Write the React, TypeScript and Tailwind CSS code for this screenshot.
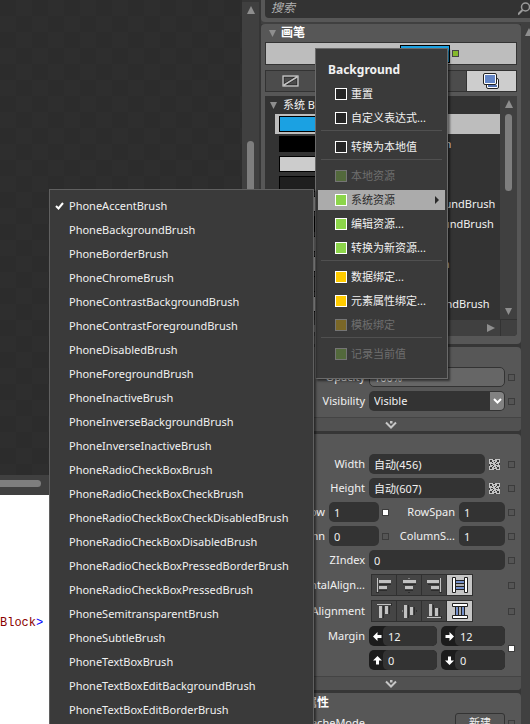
import type { ReactNode } from 'react';

const resources = [
  'PhoneAccentBrush',
  'PhoneBackgroundBrush',
  'PhoneBorderBrush',
  'PhoneChromeBrush',
  'PhoneContrastBackgroundBrush',
  'PhoneContrastForegroundBrush',
  'PhoneDisabledBrush',
  'PhoneForegroundBrush',
  'PhoneInactiveBrush',
  'PhoneInverseBackgroundBrush',
  'PhoneInverseInactiveBrush',
  'PhoneRadioCheckBoxBrush',
  'PhoneRadioCheckBoxCheckBrush',
  'PhoneRadioCheckBoxCheckDisabledBrush',
  'PhoneRadioCheckBoxDisabledBrush',
  'PhoneRadioCheckBoxPressedBorderBrush',
  'PhoneRadioCheckBoxPressedBrush',
  'PhoneSemitransparentBrush',
  'PhoneSubtleBrush',
  'PhoneTextBoxBrush',
  'PhoneTextBoxEditBackgroundBrush',
  'PhoneTextBoxEditBorderBrush',
];

const swatches = [
  'bg-[#1ba1e2]',
  'bg-black',
  'bg-[#cccccc]',
  'bg-[#1f1f1f]',
  'bg-[#cccccc]',
  'bg-black',
  'bg-[#8a8a8a]',
  'bg-[#cccccc]',
  'bg-[#333333]',
  'bg-[#cccccc]',
];

type Entry = { label: string; color: string; disabled?: boolean; active?: boolean };

const menuGroups: Entry[][] = [
  [
    { label: '重置', color: 'border-white bg-[#262626]' },
    { label: '自定义表达式...', color: 'border-white bg-[#262626]' },
  ],
  [{ label: '转换为本地值', color: 'border-white bg-[#262626]' }],
  [
    { label: '本地资源', color: 'border-[#757575] bg-[#53693c]', disabled: true },
    { label: '系统资源', color: 'border-white bg-[#8cd54a]', active: true },
    { label: '编辑资源...', color: 'border-white bg-[#8cd54a]' },
    { label: '转换为新资源...', color: 'border-white bg-[#8cd54a]' },
  ],
  [
    { label: '数据绑定...', color: 'border-white bg-[#ffcc00]' },
    { label: '元素属性绑定...', color: 'border-white bg-[#ffcc00]' },
    { label: '模板绑定', color: 'border-[#757575] bg-[#7a6727]', disabled: true },
  ],
  [{ label: '记录当前值', color: 'border-[#757575] bg-[#53693c]', disabled: true }],
];

function Triangle({ dir, className = '' }: { dir: 'up' | 'down' | 'right'; className?: string }) {
  const d = { up: 'M4 0L8 8H0Z', down: 'M0 1H7L3.5 8Z', right: 'M0 0L8 4L0 8Z' }[dir];
  return (
    <svg viewBox="0 0 8 8" className={`size-2 shrink-0 fill-[#8e8e8e] ${className}`}>
      <path d={d} />
    </svg>
  );
}

function Marker({ set = false, name }: { set?: boolean; name: string }) {
  return (
    <button
      aria-label={`${name} options`}
      className={`size-[7px] shrink-0 border border-[#3c3c3c] ${set ? 'bg-white' : 'bg-[#555555]'}`}
    />
  );
}

function Panel({ children, className = '' }: { children: ReactNode; className?: string }) {
  return <section className={`overflow-hidden rounded-[4px] bg-[#575757] ${className}`}>{children}</section>;
}

function Expander({ name }: { name: string }) {
  return (
    <button aria-label={name} className="flex h-3.5 w-full items-center justify-center border-t border-[#444444] bg-[#515151]">
      <svg viewBox="0 0 12 9" className="h-[9px] w-3">
        <path d="M1 2.5L6 7.5L11 2.5" fill="none" stroke="#c6c6c6" strokeWidth="2" />
        <rect x="5" y="1" width="2.5" height="2.5" fill="#c6c6c6" />
      </svg>
    </button>
  );
}

const field = 'h-5 min-w-0 rounded-[5px] bg-[#333333] px-[5px] text-[#f1f1f1] outline-none';

function Row({ id, label, set, children }: { id: string; label: string; set?: boolean; children: ReactNode }) {
  return (
    <div className="flex items-center pr-1.5 pl-1">
      <label htmlFor={id} className="w-[100px] shrink-0 text-right whitespace-nowrap">{label}</label>
      <div className="ml-1 flex min-w-0 flex-1 items-center">{children}</div>
      <div className="ml-[3px] flex"><Marker name={label} set={set} /></div>
    </div>
  );
}

function SplitRow({ label, value, set, label2, value2 }: { label: string; value: string; set?: boolean; label2: string; value2: string }) {
  return (
    <div className="flex items-center pr-1.5 pl-1">
      <label htmlFor={label} className="w-[60px] shrink-0 text-right">{label}</label>
      <input id={label} defaultValue={value} className={`${field} ml-1 w-[50px]`} />
      <div className="ml-[3px] flex"><Marker name={label} set={set} /></div>
      <label htmlFor={label2} className="min-w-0 flex-1 text-right whitespace-nowrap">{label2}</label>
      <input id={label2} defaultValue={value2} className={`${field} ml-1 w-[46px]`} />
      <div className="ml-[3px] flex"><Marker name={label2} /></div>
    </div>
  );
}

function AutoIcon() {
  return (
    <svg viewBox="0 0 11 11" className="size-[11px]" shapeRendering="crispEdges">
      <rect width="11" height="11" fill="#c4c4c4" />
      <g fill="#3a3a3a">
        <path d="M4 0H6V1H4ZM5 2H6V3H5ZM0 5H1V7H0ZM2 5H4V6H2ZM7 5H9V6H7ZM10 4H11V6H10ZM5 8H6V9H5ZM5 10H7V11H5Z" />
        <path d="M2 2H3V3H2ZM3 3H4V4H3ZM8 2H9V3H8ZM7 3H8V4H7ZM6 4H7V5H6ZM4 6H5V7H4ZM3 7H4V8H3ZM2 8H3V9H2ZM7 7H8V8H7ZM8 8H9V9H8Z" />
        <path d="M1 1H3V2H1ZM1 2H2V3H1ZM8 1H10V2H8ZM9 2H10V3H9ZM1 8H2V10H1ZM2 9H3V10H2ZM9 8H10V10H9ZM8 9H9V10H8Z" />
      </g>
    </svg>
  );
}

const alignShapes = [
  <g key="s">
    <path d="M1.500 1V15" stroke="#c2c2c2" />
    <path d="M3 3H15V6H3ZM3 9H11V12H3Z" fill="#c2c2c2" />
    <path d="M3 7.500H15M3 13.500H11M0 15.500H3" stroke="#2c2c2c" />
  </g>,
  <g key="c">
    <path d="M8 1V2M8 7V8M8 13V14" stroke="#c2c2c2" />
    <path d="M2 3H15V6H2ZM4 9H12V12H4Z" fill="#c2c2c2" />
    <path d="M2 7.500H15M4 13.500H12M7 15.500H9" stroke="#2c2c2c" />
  </g>,
  <g key="e">
    <path d="M14.500 1V15" stroke="#c2c2c2" />
    <path d="M1 3H13V6H1ZM5 9H13V12H5Z" fill="#c2c2c2" />
    <path d="M2 7.500H13M5 13.500H13M13 15.500H16" stroke="#2c2c2c" />
  </g>,
  <g key="f" stroke="#222">
    <path d="M3 3.500H13V6.500H3ZM3 9.500H13V12.500H3Z" fill="#8fa9e0" />
    <path d="M4 5H12M4 11H12" stroke="#5b78b8" />
    <path d="M3 8H13" stroke="#999" />
    <path d="M.5.5H3.500V15.500H.5ZM12.500.5H15.500V15.500H12.500Z" fill="#fff" />
  </g>,
];

function AlignGroup({ id, vertical = false }: { id: string; vertical?: boolean }) {
  return (
    <div id={id} role="group" className="ml-0.5 flex h-[22px] divide-x divide-[#303030] border border-[#303030] bg-[#454545]">
      {alignShapes.map((shape, i) => (
        <button
          key={i}
          aria-label={`${id} ${i}`}
          className={`flex w-[25px] items-center justify-center ${i === 3 ? 'bg-[#c6c6c6]' : ''}`}
        >
          <svg viewBox="0 0 16 16" className="size-4">
            <g transform={vertical ? 'matrix(0 1 1 0 0 0)' : undefined}>{shape}</g>
          </svg>
        </button>
      ))}
    </div>
  );
}

function MarginField({ id, value, turn, className }: { id: string; value: string; turn: string; className: string }) {
  return (
    <div className={`flex h-5 items-center rounded-[5px] bg-[#1c1c1c] ${className}`}>
      <span className="flex w-3.5 shrink-0 justify-center pl-0.5">
        <svg viewBox="0 0 9 9" className={`size-[9px] fill-white ${turn}`}>
          <path d="M0 4.500L4.500 0V3H8.500V6H4.500V9Z" />
        </svg>
      </span>
      <input id={id} aria-label={id} defaultValue={value} className={`${field} w-full`} />
    </div>
  );
}

function BrushPanel() {
  return (
    <Panel className="px-1 pb-2">
      <h2 className="flex h-[18px] items-center gap-1 pl-1 text-xs font-bold text-white">
        <Triangle dir="down" />
        画笔
      </h2>
      <div className="flex h-[23px] items-center justify-end border border-[#333333] bg-[#bdbdbd] pr-[57px]">
        <span className="h-[18px] w-[50px] border border-black bg-[#1ba1e2]" />
        <button aria-label="Background options" className="ml-0.5 size-[7px] border border-[#444444] bg-[#84b92b]" />
      </div>
      <div role="tablist" className="mt-[5px] flex h-[22px] divide-x divide-[#333333] border border-[#333333] bg-[#4c4c4c]">
        <button role="tab" aria-label="No brush" className="flex flex-1 items-center justify-center">
          <svg viewBox="0 0 17 12" className="h-3 w-[17px]" fill="none">
            <path d="M1 1H16V11H1ZM2 10L15 2" stroke="#252525" strokeWidth="3" />
            <path d="M1 1H16V11H1ZM2 10L15 2" stroke="#c2c2c2" strokeWidth="1.500" />
          </svg>
        </button>
        <button role="tab" aria-label="Solid color brush" className="flex-1" />
        <button role="tab" aria-label="Gradient brush" className="flex-1" />
        <button role="tab" aria-label="Tile brush" className="flex flex-1 items-center justify-center">
          <span className="h-2.5 w-3.5 border border-[#8a8a8a]" />
        </button>
        <button role="tab" aria-label="Brush resources" className="flex flex-1 items-center justify-center bg-[#cdcdcd]">
          <svg viewBox="0 0 16 16" className="size-4" stroke="#222">
            <rect x="3.500" y="5.500" width="12" height="10" rx="1.500" fill="#fff" />
            <path d="M5 13H14" stroke="#5472b0" strokeWidth="2" />
            <rect x=".5" y=".5" width="13" height="11" rx="1.500" fill="#fff" />
            <rect x="2" y="2" width="10" height="8" fill="#6385c6" stroke="none" />
          </svg>
        </button>
      </div>
      <div className="mt-1 rounded-b-[4px] bg-[#333333]">
        <div className="flex">
          <div className="h-[223px] min-w-0 flex-1 overflow-hidden">
            <h3 className="flex h-[18px] items-center gap-[5px] pl-[5px] text-[#f1f1f1]">
              <Triangle dir="down" />
              系统 Brush 资源
            </h3>
            <ul className="ml-2.5">
              {swatches.map((color, i) => (
                <li key={resources[i]} className={`flex h-5 items-center gap-1.5 pl-1 ${i === 0 ? 'bg-[#bdbdbd]' : 'text-[#f1f1f1]'}`}>
                  <span className={`h-4 w-10 shrink-0 border border-black ${color}`} />
                  {i > 0 && resources[i]}
                </li>
              ))}
            </ul>
          </div>
          <div className="flex w-[17px] flex-col items-center bg-[#404040] py-1">
            <Triangle dir="up" />
            <span className="mt-1.5 h-[77px] w-[7px] rounded-full bg-[#7e7e7e]" />
            <Triangle dir="down" className="mt-auto" />
          </div>
        </div>
        <div className="flex h-[17px] items-center rounded-b-[4px] border-t border-[#333333] bg-[#404040]">
          <span className="ml-5 h-[7px] w-[163px] rounded-full bg-[#7e7e7e]" />
          <Triangle dir="right" className="mr-[5px] ml-auto" />
          <span className="h-full w-[17px] border-l border-[#333333]" />
        </div>
      </div>
    </Panel>
  );
}

function AppearancePanel() {
  return (
    <Panel>
      <h2 className="h-5 pl-5 text-xs leading-5 font-bold text-white">外观</h2>
      <div className="flex flex-col gap-1 pb-1.5">
        <Row id="opacity" label="Opacity">
          <input id="opacity" defaultValue="100%" className="h-5 w-full min-w-0 rounded-[5px] border border-[#333333] bg-[#666666] px-1 text-[#dddddd]" />
        </Row>
        <Row id="visibility" label="Visibility">
          <div className="relative flex-1">
            <select id="visibility" className={`${field} w-full appearance-none`}>
              <option>Visible</option>
              <option>Collapsed</option>
            </select>
            <span className="pointer-events-none absolute inset-y-px right-px flex w-3.5 items-center justify-center rounded-r-[4px] bg-[#828282]">
              <svg viewBox="0 0 9 6" className="h-1.5 w-[9px]" fill="none" stroke="#fff" strokeWidth="2">
                <path d="M1 1L4.500 4.500L8 1" />
              </svg>
            </span>
          </div>
        </Row>
      </div>
      <Expander name="显示高级属性" />
    </Panel>
  );
}

function LayoutPanel() {
  return (
    <Panel>
      <h2 className="h-5 pl-5 text-xs leading-5 font-bold text-white">布局</h2>
      <div className="flex flex-col gap-1 pb-1.5">
        {[['Width', '自动(456)'], ['Height', '自动(607)']].map(([name, value]) => (
          <Row key={name} id={name} label={name}>
            <input id={name} defaultValue={value} className={`${field} flex-1`} />
            <button aria-label={`${name} auto`} className="mx-1 mr-[5px]"><AutoIcon /></button>
          </Row>
        ))}
        <SplitRow label="Row" value="1" set label2="RowSpan" value2="1" />
        <SplitRow label="Column" value="0" label2="ColumnS..." value2="1" />
        <Row id="ZIndex" label="ZIndex">
          <input id="ZIndex" defaultValue="0" className={`${field} w-full`} />
        </Row>
        <Row id="horizontal" label="HorizontalAlign..."><AlignGroup id="horizontal" /></Row>
        <Row id="vertical" label="VerticalAlignment"><AlignGroup id="vertical" vertical /></Row>
        <div className="flex pr-1.5 pl-1">
          <label htmlFor="Left" className="w-[100px] shrink-0 text-right leading-5">Margin</label>
          <div className="ml-1 flex flex-1 flex-wrap gap-1">
            <MarginField id="Left" value="12" turn="" className="w-[68px]" />
            <MarginField id="Right" value="12" turn="rotate-180" className="w-16" />
            <MarginField id="Top" value="0" turn="rotate-90" className="w-[68px]" />
            <MarginField id="Bottom" value="0" turn="-rotate-90" className="w-16" />
          </div>
          <div className="ml-[3px] flex items-center"><Marker name="Margin" set /></div>
        </div>
      </div>
      <Expander name="显示高级属性" />
    </Panel>
  );
}

function ContextMenu() {
  return (
    <div role="menu" aria-label="Background" className="absolute top-12 right-[82px] w-[133px] border border-[#6a6a6a] bg-[#3a3a3a] pt-2 pb-3 shadow-[2px_2px_2px_rgba(0,0,0,0.5)]">
      <h2 className="pl-3 text-xs leading-[25px] font-bold text-[#f1f1f1]">Background</h2>
      {menuGroups.map((group, i) => (
        <div key={i}>
          {i > 0 && <div role="separator" className="mx-[5px] h-[5px] border-t border-[#505050]" />}
          {group.map((item) => (
            <div key={item.label} className="px-0.5 py-0.5">
              <button
                role="menuitem"
                disabled={item.disabled}
                className={`flex h-5 w-full items-center gap-1 pr-1.5 pl-[17px] whitespace-nowrap ${item.active ? 'bg-[#ababab] text-[#2b2b2b]' : item.disabled ? 'text-[#6e6e6e]' : 'text-[#f1f1f1]'}`}
              >
                <span className={`size-3 shrink-0 border ${item.color}`} />
                {item.label}
                {item.active && (
                  <svg viewBox="0 0 4 8" className="ml-auto h-2 w-1 fill-[#2b2b2b]"><path d="M0 0L4 4L0 8Z" /></svg>
                )}
              </button>
            </div>
          ))}
        </div>
      ))}
    </div>
  );
}

function ResourceMenu() {
  return (
    <div role="menu" aria-label="系统资源" className="absolute top-[189px] right-[216px] bottom-0 w-[265px] overflow-hidden border border-b-0 border-[#606060] bg-[#3a3a3a] pt-1 shadow-[2px_2px_2px_rgba(0,0,0,0.5)]">
      {resources.map((name, i) => (
        <button key={name} role="menuitemradio" aria-checked={i === 0} className="flex h-6 w-full items-center pl-[5px] text-[#f1f1f1]">
          <span className="w-3.5">
            {i === 0 && (
              <svg viewBox="0 0 9 8" className="h-2 w-[9px]" fill="none" stroke="#fff" strokeWidth="2">
                <path d="M1 4L3.500 6.500L8 1" />
              </svg>
            )}
          </span>
          {name}
        </button>
      ))}
    </div>
  );
}

export default function App() {
  return (
    <div className="relative flex h-screen overflow-hidden bg-[#363636] font-['Noto_Sans','Noto_Sans_CJK_SC',sans-serif] text-[11px] leading-4 text-[#f1f1f1]">
      <main className="flex min-w-0 flex-1 flex-col">
        <div className="flex h-[475px] shrink-0">
          <div className="flex-1 bg-[#2c2c2c] bg-[conic-gradient(#2e2e2e_25%,transparent_0_50%,#2e2e2e_0_75%,transparent_0)] bg-size-[32px_32px]" />
          <div className="mt-0.5 mr-0.5 flex w-[17px] flex-col items-center bg-[#404040] pt-1">
            <Triangle dir="up" />
            <span className="mt-[127px] h-[190px] w-[7px] rounded-full bg-[#7e7e7e]" />
          </div>
        </div>
        <div className="flex h-5 shrink-0 items-center bg-[#404040] pb-1">
          <span className="h-[7px] w-[41px] rounded-r-full bg-[#7e7e7e]" />
        </div>
        <div className="flex-1 bg-white pt-[120px]">
          <code className="block font-['Liberation_Mono',monospace] text-[12px] leading-4 text-[#8b0000]">
            Block<span className="text-[#0000ff]">&gt;</span>
          </code>
        </div>
      </main>

      <aside className="flex w-[269px] shrink-0 flex-col bg-[#404040]">
        <div className="flex h-[22px] shrink-0 rounded-bl-[4px] bg-[#575757] pb-1 pl-1">
          <input type="search" aria-label="搜索" placeholder="搜索" className="min-w-0 flex-1 rounded-bl-[4px] bg-[#333333] pb-0.5 pl-1.5 text-xs italic placeholder:text-[#b0b0b0]" />
          <svg viewBox="0 0 12 14" className="h-[18px] w-3 bg-[#333333]" fill="none" stroke="#9a9a9a" strokeWidth="1.500">
            <circle cx="7.500" cy="5" r="4" />
            <path d="M4.500 8L0 12.500" strokeWidth="2" />
          </svg>
        </div>
        <div className="mt-0.5 flex min-h-0 flex-1">
          <div className="flex min-w-0 flex-1 flex-col gap-[3px] overflow-hidden bg-[#363636] *:shrink-0">
            <BrushPanel />
            <AppearancePanel />
            <LayoutPanel />
            <Panel>
              <h2 className="h-5 pl-5 text-xs leading-5 font-bold text-white">公共属性</h2>
              <Row id="CacheMode" label="CacheMode">
                <button id="CacheMode" className="ml-auto h-5 w-[50px] rounded-[3px] border border-[#333333]">新建</button>
              </Row>
            </Panel>
          </div>
          <div className="w-[9px] overflow-hidden pt-1 pl-1">
            <Triangle dir="up" />
          </div>
        </div>
      </aside>

      <ContextMenu />
      <ResourceMenu />
    </div>
  );
}
